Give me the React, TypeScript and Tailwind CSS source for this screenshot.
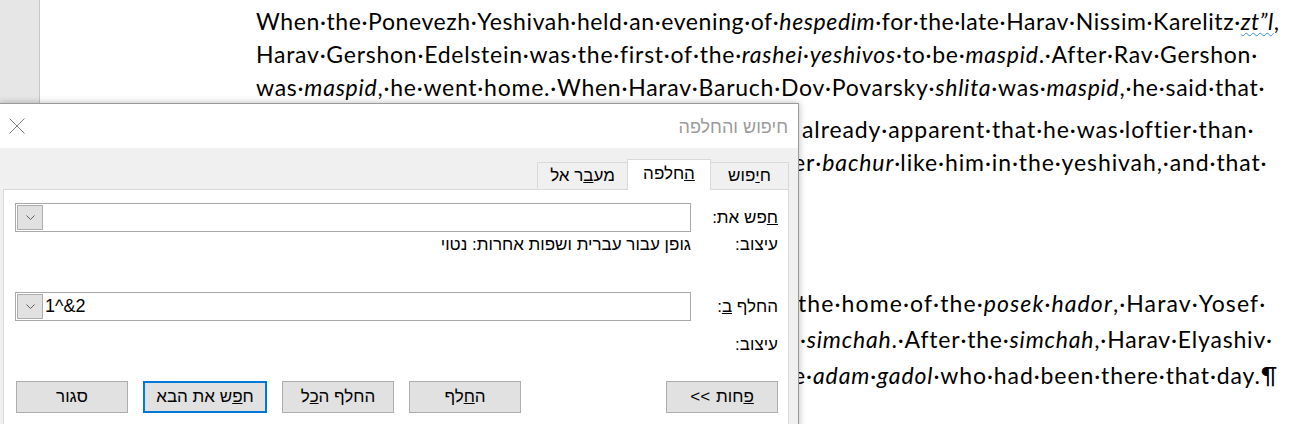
import React from "react";

const I = ({ children }: { children: React.ReactNode }) => <span className="italic">{children}</span>;

function Doc() {
  return (
    <div className="flex-1 pt-[5px] pl-[216px] font-['Lato',sans-serif] text-[23px] tracking-[0.9px] text-black whitespace-nowrap">
      <div className="h-[33px] leading-[33px] tracking-[0.6px]">
        When·the·Ponevezh·Yeshivah·held·an·evening·of·<I>hespedim</I>·for·the·late·Harav·Nissim·Karelitz·
        <span className="italic underline decoration-wavy decoration-[#3b8ee6] decoration-1 underline-offset-2">zt”l</span>,
      </div>
      <div className="h-[33px] leading-[33px] tracking-[0.75px]">
        Harav·Gershon·Edelstein·was·the·first·of·the·<I>rashei·yeshivos</I>·to·be·<I>maspid</I>.·After·Rav·Gershon·
      </div>
      <div className="h-[33px] leading-[33px] tracking-[0.75px]">
        was·<I>maspid</I>,·he·went·home.·When·Harav·Baruch·Dov·Povarsky·<I>shlita</I>·was·<I>maspid</I>,·he·said·that·
      </div>
      <div className="mt-[9px] h-[33px] leading-[33px] pl-[546px]">already·apparent·that·he·was·loftier·than·</div>
      <div className="h-[33px] leading-[33px] pl-[537px]">
        er·<I>bachur</I>·like·him·in·the·yeshivah,·and·that·
      </div>
      <div className="h-[33px] leading-[33px]">he·would·become·a·gadol.¶</div>
      <div className="mt-[73px] h-[36px] leading-[36px] pl-[542px] tracking-[1.1px]">
        the·home·of·the·<I>posek·hador</I>,·Harav·Yosef·
      </div>
      <div className="h-[36px] leading-[36px] pl-[544px] tracking-[0.8px]">
        ·<I>simchah</I>.·After·the·<I>simchah</I>,·Harav·Elyashiv·
      </div>
      <div className="h-[36px] leading-[36px] pl-[537px]">
        e·<I>adam·gadol</I>·who·had·been·there·that·day.¶
      </div>
    </div>
  );
}

function Chevron() {
  return (
    <svg width="9" height="5" viewBox="0 0 9 5" className="block">
      <polyline points="0.5,0.5 4.5,4.5 8.5,0.5" fill="none" stroke="#606060" strokeWidth="1" />
    </svg>
  );
}

function Combo({ value }: { value?: string }) {
  return (
    <div className="flex-1 h-[29px] border border-[#a9a9a9] bg-white">
      <div dir="ltr" className="flex items-center h-full [direction:ltr]">
        <div className="ml-[1px] w-[26px] h-[25px] border border-[#adadad] bg-[#e1e1e1] flex items-center justify-center">
          <Chevron />
        </div>
        {value && (
          <span className="ml-[2px] font-['Liberation_Sans',sans-serif] text-[18px] text-black">{value}</span>
        )}
      </div>
    </div>
  );
}

function Btn({ children, focused }: { children: React.ReactNode; focused?: boolean }) {
  return (
    <div
      className={
        focused
          ? "w-[124px] h-[32px] border-2 border-[#0078d7] bg-[#e1e1e1] flex items-center justify-center text-[17px] text-black"
          : "w-[112px] h-[32px] border border-[#adadad] bg-[#e1e1e1] flex items-center justify-center text-[17px] text-black"
      }
    >
      {children}
    </div>
  );
}

function Dialog() {
  return (
    <div
      dir="rtl"
      className="absolute left-[-1px] top-[103px] w-[800px] h-[340px] bg-[#f0f0f0] border border-[#9a9a9a] shadow-[0_0_7px_rgba(0,0,0,0.28)] font-['Liberation_Sans','DejaVu_Sans',sans-serif]"
    >
      <div className="h-[44px] bg-white flex items-center justify-between pr-[10px] pl-[9px]">
        <span className="text-[18px] text-[#9b9b9b] pt-[2px]">חיפוש והחלפה</span>
        <svg width="16" height="16" viewBox="0 0 16 16" className="block">
          <line x1="0.5" y1="0.5" x2="15.5" y2="15.5" stroke="#808080" strokeWidth="1" />
          <line x1="15.5" y1="0.5" x2="0.5" y2="15.5" stroke="#808080" strokeWidth="1" />
        </svg>
      </div>
      <div className="pt-[11px] pr-[9px] pl-[3px]">
        <div className="flex items-end h-[30px] text-[17px] text-black">
          <div className="w-[78px] h-[27px] border-t border-r border-[#d9d9d9] bg-[#f0f0f0] flex items-center justify-center">
            ח<span className="underline">י</span>פוש
          </div>
          <div className="relative z-10 w-[84px] h-[31px] -mb-px border-t border-l border-r border-[#d9d9d9] bg-white flex items-center justify-center pb-[3px]">
            <span className="underline">ה</span>חלפה
          </div>
          <div className="w-[90px] h-[27px] border-t border-l border-[#d9d9d9] bg-[#f0f0f0] flex items-center justify-center">
            מע<span className="underline">ב</span>ר אל
          </div>
        </div>
        <div className="h-[260px] bg-white border border-[#d9d9d9] pt-[13px] pr-[10px] pl-[11px] text-[17px] text-black">
          <div className="flex items-center">
            <div className="w-[87px]">
              <span className="underline">ח</span>פש את:
            </div>
            <Combo />
          </div>
          <div className="flex items-center h-[20px] mt-[3px]">
            <div className="w-[87px]">עיצוב:</div>
            <div>גופן עבור עברית ושפות אחרות: נטוי</div>
          </div>
          <div className="flex items-center mt-[37px]">
            <div className="w-[87px]">
              החלף <span className="underline">ב</span>:
            </div>
            <Combo value="1^&2" />
          </div>
          <div className="flex items-center h-[20px] mt-[14px]">
            <div className="w-[87px]">עיצוב:</div>
          </div>
          <div className="flex justify-between mt-[26px] pl-[1px]">
            <Btn>
              <div className="flex items-center gap-[6px]">
                <span>
                  <span className="underline">פ</span>חות
                </span>
                <bdo dir="ltr" className="[direction:ltr] [unicode-bidi:bidi-override]">
                  {"<<"}
                </bdo>
              </div>
            </Btn>
            <div className="flex gap-[15px]">
              <Btn>
                ה<span className="underline">ח</span>לף
              </Btn>
              <Btn>
                החלף ה<span className="underline">כ</span>ל
              </Btn>
              <Btn focused>
                ח<span className="underline">פ</span>ש את הבא
              </Btn>
              <Btn>סגור</Btn>
            </div>
          </div>
        </div>
      </div>
    </div>
  );
}

export default function App() {
  return (
    <div className="relative w-[1294px] h-[424px] overflow-hidden bg-white">
      <div className="flex h-full">
        <div className="w-[40px] shrink-0 bg-[#e6e6e6] border-r border-[#c6c6c6]" />
        <Doc />
      </div>
      <Dialog />
    </div>
  );
}
